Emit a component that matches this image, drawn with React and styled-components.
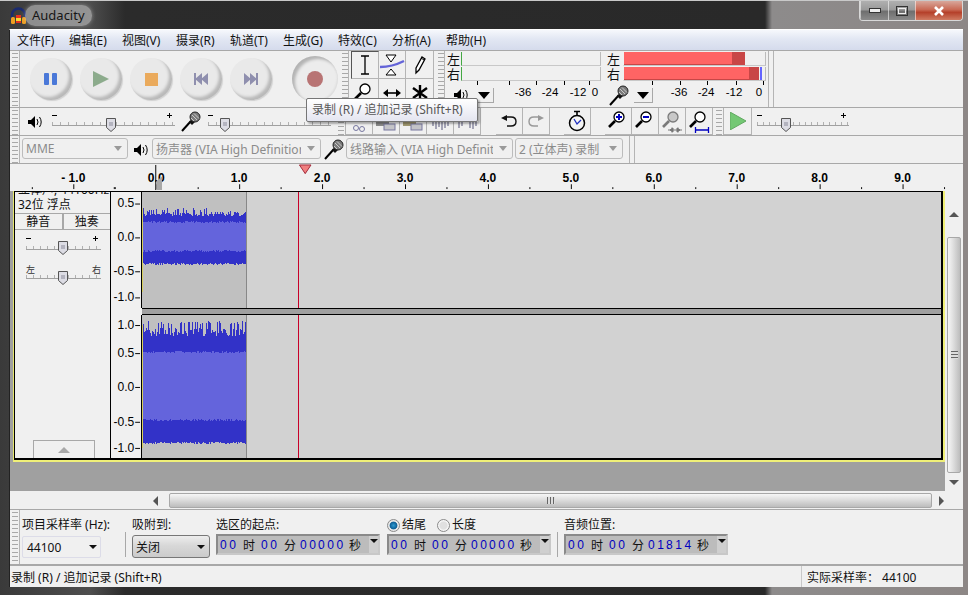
import React from "react";
import styled, { createGlobalStyle } from "styled-components";

const UI_FONT = `"Noto Sans", "Noto Sans CJK SC", sans-serif`;

const GlobalStyle = createGlobalStyle`
  html, body {
    margin: 0;
    padding: 0;
    overflow: hidden;
    background: #1c1c1c;
  }
  body {
    font-family: ${UI_FONT};
    font-size: 12px;
    color: #111;
  }
`;

/* ---------- window chrome ---------- */

const Window = styled.div`
  width: 968px;
  height: 595px;
  overflow: hidden;
  position: relative;
  display: flex;
  flex-direction: column;
  background: linear-gradient(
    90deg,
    #3a3a3a 0,
    #4e4e4e 90px,
    #2b2b2b 125px,
    #292929 765px,
    #8d8b8b 772px,
    #8d8786 968px
  );
`;

const TitleBar = styled.div`
  height: 29px;
  flex: none;
  display: flex;
  align-items: flex-start;
  padding-left: 10px;
  box-sizing: border-box;
  border-top: 1px solid #c9c9c9;
`;

const AppLogo = styled.svg`
  width: 17px;
  height: 18px;
  margin-top: 6px;
`;

const AppName = styled.div`
  margin: 4px 0 0 -2px;
  padding: 0 7px;
  height: 21px;
  line-height: 21px;
  font-size: 13px;
  color: #161616;
  background: rgba(205, 205, 205, 0.55);
  border-radius: 10px;
  box-shadow: 0 0 4px rgba(205, 205, 205, 0.5);
`;

const WinButtons = styled.div`
  margin-left: auto;
  margin-right: 5px;
  display: flex;
  height: 19px;
  border: 1px solid #d8d8d8;
  border-top: none;
  border-radius: 0 0 4px 4px;
  overflow: hidden;
`;

const WinButton = styled.div`
  width: ${(p) => p.$w}px;
  display: flex;
  align-items: center;
  justify-content: center;
  border-left: 1px solid rgba(255, 255, 255, 0.55);
  background: ${(p) =>
    p.$close
      ? "linear-gradient(180deg,#d8a79b 0,#c96a55 45%,#b5402a 60%,#cf7b62 100%)"
      : "linear-gradient(180deg,#b0b0b0 0,#9a9a9a 45%,#6f6f6f 55%,#8a8a8a 100%)"};
`;

const Client = styled.div`
  margin-left: 9px;
  width: 954px;
  height: 558px;
  flex: none;
  padding-left: 1px;
  box-sizing: border-box;
  background: #f0f0f0;
  display: flex;
  flex-direction: column;
  border-top: 1px solid #fff;
  border-left: 1px solid #222;
  padding-left: 0;
`;

const MenuBar = styled.div`
  height: 20px;
  flex: none;
  display: flex;
  padding-left: 7px;
  align-items: center;
  background: linear-gradient(180deg, #f6f8fc 0, #e2e7f3 45%, #d5dbec 100%);
`;

const MenuItem = styled.div`
  width: ${(p) => p.$w}px;
  flex: none;
  font-size: 12px;
  white-space: nowrap;
`;

/* ---------- toolbars ---------- */

const ToolRow = styled.div`
  height: ${(p) => p.$h}px;
  flex: none;
  display: flex;
  border-top: 1px solid #a8a8a8;
  box-sizing: border-box;
`;

const Grip = styled.div`
  width: ${(p) => p.$w || 10}px;
  flex: none;
  margin-left: ${(p) => p.$ml || 0}px;
  box-sizing: border-box;
  border-right: 1px solid #b4b4b4;
  background: repeating-linear-gradient(
    180deg,
    #f0f0f0 0,
    #f0f0f0 2px,
    #a8a8a8 2px,
    #a8a8a8 3px,
    #f0f0f0 3px,
    #f0f0f0 4px
  );
  background-size: 6px 100%;
  background-repeat: no-repeat;
  background-position: 2px 0;
`;

const Transport = styled.div`
  width: 320px;
  flex: none;
  display: flex;
  align-items: center;
  padding-left: 6px;
  box-sizing: border-box;
`;

const TransportSlot = styled.div`
  width: 50px;
  flex: none;
  display: flex;
  justify-content: center;
`;

const RoundButton = styled.div`
  width: 42px;
  height: 42px;
  border-radius: 50%;
  display: flex;
  align-items: center;
  justify-content: center;
  background: #e9e9e9;
  box-shadow: inset -3px -3px 3px #b9b9b9, 1px 1px 1px #d0d0d0;
`;

const RecordButton = styled(RoundButton)`
  width: 46px;
  height: 46px;
  margin-left: 16px;
  background: #ececec;
  box-shadow: inset 3px 3px 3px #b4b4b4, inset -1px -1px 2px #dcdcdc;
`;

const ToolGrid = styled.div`
  width: 83px;
  margin-left: 2px;
  flex: none;
  display: grid;
  grid-template-columns: repeat(3, 1fr);
  grid-template-rows: 28px 28px;
`;

const ToolCell = styled.div`
  display: flex;
  align-items: center;
  justify-content: center;
  border-right: 1px solid #b4b4b4;
  border-bottom: 1px solid #b4b4b4;
  box-sizing: border-box;
  ${(p) => p.$down && "border-left: 1px solid #555; border-top: 1px solid #555;"}
`;

const Meter = styled.div`
  width: ${(p) => p.$w}px;
  flex: none;
  margin-left: ${(p) => p.$ml || 0}px;
  display: flex;
  flex-direction: column;
`;

const MeterLine = styled.div`
  height: 15px;
  flex: none;
  display: flex;
  align-items: center;
`;

const MeterTag = styled.div`
  width: ${(p) => p.$w}px;
  flex: none;
  text-align: center;
  font-size: 13px;
  line-height: 14px;
`;

const MeterBar = styled.div`
  flex: 1;
  height: 14px;
  display: flex;
  box-sizing: border-box;
  border-right: 1px solid #bbb;
  border-bottom: 1px solid #c8c8c8;
  border-left: 1px solid ${(p) => (p.$idle ? "#44a844" : "transparent")};
`;

const MeterRms = styled.div`
  width: ${(p) => p.$w}px;
  background: #ff6464;
  box-shadow: inset 0 -1px 0 #c84646;
`;

const MeterPeak = styled.div`
  width: ${(p) => p.$w}px;
  background: #c84646;
`;

const MeterHold = styled.div`
  width: 2px;
  margin-left: ${(p) => p.$ml}px;
  background: #6464ff;
`;

const MeterFoot = styled.div`
  flex: 1;
  display: flex;
  position: relative;
`;

const FootIcon = styled.div`
  width: ${(p) => p.$w}px;
  flex: none;
  display: flex;
  align-items: center;
  justify-content: center;
  padding-top: 2px;
`;

const FootCaret = styled.div`
  width: 18px;
  height: 14px;
  margin-top: 7px;
  flex: none;
  display: flex;
  align-items: center;
  justify-content: center;
  border-right: 1px solid #a8a8a8;
  border-bottom: 1px solid #a8a8a8;
  &::before {
    content: "";
    border: 6px solid transparent;
    border-top: 7px solid #000;
    border-bottom: none;
  }
`;

const DoubleRule = styled.div`
  width: 4px;
  margin-left: ${(p) => p.$ml}px;
  flex: none;
  border-left: 1px solid #b4b4b4;
  border-right: 1px solid #b4b4b4;
`;

const IconCell = styled.div`
  width: ${(p) => p.$w || 27}px;
  flex: none;
  margin-left: ${(p) => p.$ml || 0}px;
  display: flex;
  align-items: center;
  justify-content: center;
  box-sizing: border-box;
  ${(p) =>
    p.$btn &&
    "border-right: 1px solid #b4b4b4; border-bottom: 1px solid #b4b4b4;"}
`;

const DeviceSelect = styled.div`
  width: ${(p) => p.$w}px;
  flex: none;
  height: 21px;
  margin-top: 2px;
  margin-left: ${(p) => p.$ml || 0}px;
  box-sizing: border-box;
  border: 1px solid #bcbcbc;
  border-radius: 3px;
  display: flex;
  align-items: center;
  padding: 0 5px 0 3px;
  color: #8b8b8b;
  font-size: 12px;
  white-space: nowrap;
  overflow: hidden;
  & > span {
    flex: 1;
    overflow: hidden;
  }
  &::after {
    content: "";
    flex: none;
    margin-left: 6px;
    border: 4px solid transparent;
    border-top: 5px solid #9a9a9a;
    border-bottom: none;
  }
`;

const Tooltip = styled.div`
  position: absolute;
  left: 306px;
  top: 98px;
  width: 172px;
  height: 24px;
  box-sizing: border-box;
  padding-left: 5px;
  line-height: 22px;
  font-size: 12px;
  color: #575757;
  white-space: nowrap;
  border: 1px solid #767676;
  border-radius: 2px;
  background: linear-gradient(180deg, #fff 0, #e4e5f0 100%);
  box-shadow: 2px 2px 2px rgba(0, 0, 0, 0.3);
`;

const RulerStrip = styled.svg`
  display: block;
  flex: none;
  width: 953px;
  height: 28px;
  border-top: 1px solid #a8a8a8;
  box-sizing: border-box;
  background: #f0f0f0;
`;

/* ---------- tracks ---------- */

const Body = styled.div`
  height: 300px;
  flex: none;
  display: flex;
`;

const TrackArea = styled.div`
  width: 935px;
  flex: none;
  background: #a0a0a0;
  padding-left: 3px;
  box-sizing: border-box;
`;

const YellowFrame = styled.div`
  height: 271px;
  box-sizing: border-box;
  border-left: 1px solid #e8e870;
  border-right: 2px solid #f0f078;
  border-bottom: 2px solid #f0f078;
`;

const BlackFrame = styled.div`
  height: 100%;
  box-sizing: border-box;
  display: flex;
  border-left: 1px solid #000;
  border-top: 1px solid #000;
  border-right: 2px solid #000;
  border-bottom: 2px solid #000;
`;

const TrackPanel = styled.div`
  width: 95px;
  flex: none;
  overflow: hidden;
  display: flex;
  flex-direction: column;
  border-right: 1px solid #000;
  background: #f0f0f0;
`;

const PanelLine = styled.div`
  height: 13px;
  line-height: 13px;
  margin-top: ${(p) => p.$mt || 0}px;
  padding-left: 3px;
  font-size: 12px;
  white-space: nowrap;
`;

const MuteRow = styled.div`
  display: flex;
  height: 17px;
  margin-top: 2px;
  box-sizing: border-box;
  border-top: 1px solid #a8a8a8;
  border-bottom: 1px solid #a8a8a8;
`;

const MuteButton = styled.div`
  flex: 1;
  text-align: center;
  line-height: 15px;
  font-size: 12px;
  & + & {
    border-left: 2px solid #a8a8a8;
  }
`;

const PanelSlider = styled.svg`
  display: block;
  width: 95px;
  height: ${(p) => p.$h}px;
  flex: none;
  margin-top: ${(p) => p.$mt || 0}px;
`;

const CollapseButton = styled.div`
  width: 62px;
  height: 18px;
  margin: auto 0 0 18px;
  box-sizing: border-box;
  border: 1px solid #a8a8a8;
  border-bottom: none;
  display: flex;
  align-items: center;
  justify-content: center;
  &::before {
    content: "";
    border: 6px solid transparent;
    border-bottom: 6px solid #a8a8a8;
    border-top: none;
  }
`;

const TrackStack = styled.div`
  flex: 1;
  display: flex;
  flex-direction: column;
  background: #f0f0f0;
`;

const TrackRow = styled.div`
  height: ${(p) => p.$h}px;
  flex: none;
  display: flex;
`;

const ScaleSvg = styled.svg`
  display: block;
  width: 31px;
  flex: none;
  height: 100%;
  box-sizing: border-box;
  border-right: 1px solid #000;
`;

const Lane = styled.div`
  flex: 1;
  display: flex;
  background: #d2d2d2;
  position: relative;
`;

const ClipWave = styled.svg`
  display: block;
  width: 104px;
  height: 100%;
  flex: none;
  background: #c0c0c0;
  border-right: 1px solid #888;
  box-sizing: content-box;
`;

const PlayLine = styled.div`
  width: 1px;
  margin-left: 51px;
  background: #c80028;
`;

const TrackGap = styled.div`
  height: 7px;
  flex: none;
  box-sizing: border-box;
  margin-left: 31px;
  background: #a0a0a0;
  border-top: 1px solid #000;
  border-bottom: 1px solid #000;
`;

/* ---------- scrollbars ---------- */

const VScroll = styled.div`
  width: 18px;
  flex: none;
  display: grid;
  grid-template-rows: 46px 236px 18px;
  justify-items: center;
  align-items: center;
`;

const Arrow = styled.div`
  width: 0;
  height: 0;
  border: ${(p) => p.$s || 5}px solid transparent;
  ${(p) => `border-${p.$side}: none;`}
  ${(p) =>
    `border-${{ top: "bottom", bottom: "top", left: "right", right: "left" }[p.$side]}: ${
      p.$s || 5
    }px solid #555;`}
`;

const VThumb = styled.div`
  width: 14px;
  height: 100%;
  box-sizing: border-box;
  border: 1px solid #a8a8a8;
  border-radius: 2px;
  background: linear-gradient(90deg, #f6f6f6 0, #e0e0e0 40%, #bcbcbc 100%);
  display: flex;
  align-items: center;
  justify-content: center;
  &::before {
    content: "";
    width: 7px;
    height: 8px;
    background: repeating-linear-gradient(180deg, #666 0, #666 1px, #ddd 1px, #ddd 3px);
  }
`;

const HScroll = styled.div`
  height: 17px;
  flex: none;
  display: flex;
  align-items: center;
  margin-top: 1px;
`;

const HThumb = styled.div`
  width: 763px;
  height: 15px;
  box-sizing: border-box;
  flex: none;
  margin-left: 6px;
  border: 1px solid #a8a8a8;
  border-radius: 2px;
  background: linear-gradient(180deg, #f6f6f6 0, #e0e0e0 40%, #bcbcbc 100%);
  display: flex;
  align-items: center;
  justify-content: center;
  &::before {
    content: "";
    width: 8px;
    height: 7px;
    background: repeating-linear-gradient(90deg, #666 0, #666 1px, #ddd 1px, #ddd 3px);
  }
`;

const ArrowSlot = styled.div`
  width: ${(p) => p.$w}px;
  margin-left: ${(p) => p.$ml || 0}px;
  flex: none;
  display: flex;
  justify-content: center;
`;

/* ---------- selection bar ---------- */

const SelectionBar = styled.div`
  height: 57px;
  flex: none;
  display: flex;
  box-sizing: border-box;
  border-top: 1px solid #a8a8a8;
  border-bottom: 2px solid #a8a8a8;
`;

const Field = styled.div`
  width: ${(p) => p.$w}px;
  margin-left: ${(p) => p.$ml || 0}px;
  flex: none;
  display: flex;
  flex-direction: column;
`;

const FieldLabel = styled.div`
  height: 24px;
  padding-top: 6px;
  box-sizing: border-box;
  line-height: 16px;
  font-size: 12px;
  white-space: nowrap;
  display: flex;
  align-items: center;
`;

const SelDivider = styled.div`
  width: 1px;
  height: 25px;
  margin: 22px 0 0 ${(p) => p.$ml}px;
  background: #a8a8a8;
  flex: none;
`;

const RateBox = styled.div`
  width: 79px;
  height: 22px;
  margin-top: 2px;
  box-sizing: border-box;
  border: 1px solid #dcdce8;
  border-radius: 2px;
  display: flex;
  align-items: center;
  padding: 0 3px 0 4px;
  justify-content: space-between;
  &::after {
    content: "";
    border: 4px solid transparent;
    border-top: 4px solid #111;
    border-bottom: none;
  }
`;

const SnapBox = styled.div`
  width: 78px;
  height: 23px;
  box-sizing: border-box;
  border: 1px solid #777;
  border-radius: 3px;
  background: linear-gradient(180deg, #ededed 0, #d8d8d8 45%, #cbcbcb 100%);
  display: flex;
  align-items: center;
  padding: 0 4px 0 3px;
  justify-content: space-between;
  margin-top: 1px;
  &::after {
    content: "";
    border: 4px solid transparent;
    border-top: 4px solid #111;
    border-bottom: none;
  }
`;

const TimeBox = styled.div`
  width: 164px;
  height: 21px;
  flex: none;
  box-sizing: border-box;
  border: 2px solid #8a8a8a;
  border-right-color: #c8c8c8;
  border-bottom-color: #c8c8c8;
  background: #bcbcbc;
  display: flex;
  align-items: center;
  padding-left: 2px;
  font-size: 12px;
`;

const Digits = styled.span`
  color: #0000c0;
  letter-spacing: 2.6px;
  font-family: "Liberation Sans", sans-serif;
  width: ${(p) => p.$w}px;
  flex: none;
`;

const Unit = styled.span`
  width: ${(p) => p.$w || 24}px;
  flex: none;
  color: #111;
`;

const TimeCaret = styled.div`
  width: 9px;
  height: 100%;
  margin-left: auto;
  background: #cfcfcf;
  display: flex;
  justify-content: center;
  padding-top: 3px;
  box-sizing: border-box;
  &::before {
    content: "";
    border: 4px solid transparent;
    border-top: 4px solid #111;
    border-bottom: none;
  }
`;

const Radio = styled.span`
  width: 13px;
  height: 13px;
  box-sizing: border-box;
  flex: none;
  border-radius: 50%;
  border: 1px solid #8a8a8a;
  margin-right: 2px;
  background: ${(p) =>
    p.$on
      ? "radial-gradient(circle, #2f9ad0 0, #0d5f96 45%, #e8e8e8 55%)"
      : "radial-gradient(circle, #e0e0e0 0, #e0e0e0 45%, #f6f6f6 60%)"};
`;

const RadioText = styled.span`
  margin-right: 11px;
`;

const StatusBar = styled.div`
  flex: 1;
  display: flex;
  align-items: center;
  font-size: 12px;
  padding-left: 1px;
  position: relative;
`;

const StatusRight = styled.div`
  margin-left: auto;
  width: 162px;
  height: 100%;
  box-sizing: border-box;
  border-left: 1px solid #c8c8c8;
  padding-left: 5px;
  display: flex;
  align-items: center;
`;

/* ---------- drawings ---------- */

const Speaker = ({ color = "#000" }) => (
  <svg width="16" height="14" viewBox="0 0 16 14">
    <path d="M1 5h3l4-4v12L4 9H1z" fill={color} />
    <path d="M10 4q2 3 0 6M12.5 2q3.4 5 0 10" fill="none" stroke={color} strokeWidth="1" />
  </svg>
);

const Mic = () => (
  <svg width="20" height="21" viewBox="0 0 20 21">
    <path d="M1 20l9-10" stroke="#000" strokeWidth="2" />
    <path d="M8 11l3 3 3-3-3-3z" fill="#111" />
    <circle cx="14" cy="6" r="5" fill="#7a7a7a" stroke="#222" />
    <path d="M11 4l5 5M13 2.500l5 5M10 7l3 3" stroke="#ddd" strokeWidth="0.8" />
  </svg>
);

const Glass = ({ mark, faded, tail }) => {
  const c = faded ? "#7a7a7a" : "#000";
  return (
    <svg width="24" height="24" viewBox="0 0 24 24">
      <path d="M3 18l6-6" stroke={c} strokeWidth="2.600" />
      <circle cx="13" cy="8" r="5" fill={faded ? "#c8c8c8" : "#fff"} stroke={c} strokeWidth="1.300" />
      {mark === "in" && <path d="M13 5v6M10 8h6" stroke="#0000c0" strokeWidth="2" />}
      {mark === "out" && <path d="M10 8h6" stroke="#0000c0" strokeWidth="2" />}
      {tail === "grey" && (
        <path d="M8 21h14M12 18.500v5M18 18.500v5M10 21l3-2v4zM20 21l-3-2v4z" stroke="#777" fill="#777" />
      )}
      {tail === "blue" && <path d="M8 21h14M8.500 18v6M21.500 18v6" stroke="#0000c0" strokeWidth="1.300" />}
    </svg>
  );
};

const Triangle = ({ color }) => (
  <svg width="16" height="16" viewBox="0 0 16 16">
    <path d="M0 0L16 8 0 16z" fill={color} />
  </svg>
);

const SkipIcon = ({ flip }) => (
  <svg width="16" height="14" viewBox="0 0 16 14" style={flip ? { transform: "scaleX(-1)" } : undefined}>
    <path d="M1 1l7 6-7 6zM7 1l7 6-7 6z" fill="#8f8fae" />
    <rect x="13" y="1" width="2" height="12" fill="#8f8fae" />
  </svg>
);

const sliderTicks = (x0, x1, y, step) => {
  let d = "";
  for (let x = x0; x <= x1; x += step) d += `M${x + 0.5} ${y - 3}V${y}`;
  return d;
};

const Thumb = ({ x, y }) => (
  <g transform={`translate(${x - 5} ${y})`}>
    <path d="M.5.5h9v9L5 13.500.5 9.500z" fill="#dcdce4" stroke="#555" />
    <path d="M3 5h4M3 7h4" stroke="#8a8a9a" />
  </g>
);

// a gain style slider: minus and plus marks, scale and thumb
const Slider = ({ w, thumb, ml = 0, plus = true }) => (
  <svg width={w} height="27" viewBox={`0 0 ${w} 27`} style={{ marginLeft: ml, flex: "none", display: "block" }}>
    <path d="M0 7.500h5" stroke="#000" />
    {plus && <path d={`M${w - 8} 7.500h5M${w - 5.500} 5v5`} stroke="#000" />}
    <path d={`M0 17.500H${w}`} stroke="#a0a0a0" />
    <path d={sliderTicks(0, w - 1, 17, Math.round(w / 16))} stroke="#b0b0b0" />
    <Thumb x={thumb} y={10} />
  </svg>
);

/* waveform columns, noise is fixed by a small seeded generator */
const makeRand = (seed) => {
  let s = seed;
  return () => {
    s = (s * 16807) % 2147483647;
    return s / 2147483647;
  };
};

const buildWave = (seed, { top, topJit, rmsTop, rmsBot, bot, botJit, spike }) => {
  const r = makeRand(seed);
  let peak = "";
  let rms = "";
  for (let x = 1; x < 104; x++) {
    const t = r() < spike ? top + r() * 3 : top + topJit * (0.45 + r() * 0.55);
    const b = bot + r() * botJit;
    peak += `M${x + 0.5} ${Math.round(t)}V${Math.round(b)}`;
    const a = rmsTop + Math.round(r() * 2);
    const c = rmsBot - Math.round(r() * 2);
    rms += `M${x + 0.5} ${a}V${c}`;
  }
  return { peak, rms };
};

const waveA = buildWave(77, { top: 16, topJit: 8, rmsTop: 29, rmsBot: 60, bot: 71, botJit: 2, spike: 0.18 });
const waveB = buildWave(4242, { top: 6, topJit: 15, rmsTop: 36, rmsBot: 106, bot: 127, botJit: 2, spike: 0.32 });

const Wave = ({ data, from, to }) => (
  <ClipWave viewBox={`0 0 104 ${to}`}>
    <path d={data.peak} stroke="#3232c8" shapeRendering="crispEdges" />
    <path d={data.rms} stroke="#6464dc" shapeRendering="crispEdges" />
    <path d={`M.5 ${from}V${to - from}`} stroke="#d8d060" shapeRendering="crispEdges" />
  </ClipWave>
);

const Scale = ({ h, marks }) => (
  <ScaleSvg viewBox={`0 0 31 ${h}`}>
    {marks.map(([label, y]) => (
      <g key={label}>
        <text x="24" y={y + 4} textAnchor="end" fontFamily="Liberation Sans" fontWeight="400" fontSize="12.500" fill="#000">
          {label}
        </text>
        <path d={`M25 ${y + 0.5}h5`} stroke="#000" />
      </g>
    ))}
  </ScaleSvg>
);

const RULER_ZERO = 134;
const RULER_STEP = 86;

const Ruler = () => {
  const marks = [];
  for (let n = -1; n <= 9; n++) {
    const x = RULER_ZERO + n * RULER_STEP;
    marks.push(
      <g key={n}>
        <text x={x} y="19" textAnchor="middle" fontFamily="Liberation Sans" fontWeight="700" fontSize="12.500" fill="#000">
          {n < 0 ? "- 1.0" : `${n}.0`}
        </text>
        <path d={`M${x + 0.5} 21v5`} stroke="#000" />
        <path d={`M${x + 43.5} 24v2`} stroke="#000" />
      </g>
    );
  }
  return (
    <RulerStrip viewBox="0 0 953 28">
      {marks}
      <path d={`M${RULER_ZERO - 43.5} 24v2M5.500 24v2`} stroke="#000" />
      <path d="M133.500 1v26" stroke="#000" />
      <path d="M134 27v-9l6-5v14z" fill="#a8a8a8" />
      <path d="M282.500 1h12L288.500 10z" fill="#f08080" stroke="#a02838" />
    </RulerStrip>
  );
};

const MeterScale = ({ marks, ticks, w }) => (
  <svg width={w} height="26" viewBox={`0 0 ${w} 26`} style={{ position: "absolute", right: 0, top: 0 }}>
    {ticks.map((x) => (
      <path key={x} d={`M${x + 0.5} 0v4`} stroke="#000" />
    ))}
    {marks.map(([label, x]) => (
      <text key={label} x={x} y="15" textAnchor="middle" fontFamily="Liberation Sans" fontSize="11.500" fill="#000">
        {label}
      </text>
    ))}
  </svg>
);

const TimeField = ({ a, b, c, d }) => (
  <TimeBox>
    <Digits $w={23}>{a}</Digits>
    <Unit $w={18}>时</Unit>
    <Digits $w={23}>{b}</Digits>
    <Unit $w={16}>分</Unit>
    <Digits $w={18}>{c}.</Digits>
    <Digits $w={31}>{d}</Digits>
    <Unit $w={12}>秒</Unit>
    <TimeCaret />
  </TimeBox>
);

const menus = [
  ["文件(F)", 52],
  ["编辑(E)", 53],
  ["视图(V)", 54],
  ["摄录(R)", 54],
  ["轨道(T)", 53],
  ["生成(G)", 55],
  ["特效(C)", 54],
  ["分析(A)", 54],
  ["帮助(H)", 60],
];

export default function App() {
  return (
    <Window>
      <GlobalStyle />
      <TitleBar>
        <AppLogo viewBox="0 0 17 18">
          <path d="M2 14V8a6.500 6.500 0 0 1 13 0v6" fill="none" stroke="#1a2a70" strokeWidth="2.500" />
          <rect x="1" y="10" width="4" height="7" rx="1.500" fill="#f0a020" />
          <rect x="12" y="10" width="4" height="7" rx="1.500" fill="#f0a020" />
          <rect x="6" y="8" width="5" height="8" fill="#e83020" />
          <rect x="6" y="11" width="5" height="3" fill="#f8d830" />
        </AppLogo>
        <AppName>Audacity</AppName>
        <WinButtons>
          <WinButton $w={27}>
            <svg width="12" height="6" viewBox="0 0 12 6">
              <rect x=".5" y=".5" width="11" height="4" fill="#eee" stroke="#333" />
            </svg>
          </WinButton>
          <WinButton $w={26}>
            <svg width="12" height="10" viewBox="0 0 12 10">
              <rect x=".5" y=".5" width="11" height="9" fill="none" stroke="#333" />
              <rect x="2.500" y="2.500" width="7" height="5" fill="none" stroke="#eee" />
            </svg>
          </WinButton>
          <WinButton $w={46} $close>
            <svg width="12" height="10" viewBox="0 0 12 10">
              <path d="M2 1l8 8M10 1l-8 8" stroke="#fff" strokeWidth="2.600" />
            </svg>
          </WinButton>
        </WinButtons>
      </TitleBar>

      <Client>
        <MenuBar>
          {menus.map(([t, w]) => (
            <MenuItem key={t} $w={w}>
              {t}
            </MenuItem>
          ))}
        </MenuBar>

        <ToolRow $h={57}>
          <Grip />
          <Transport>
            <TransportSlot>
              <RoundButton>
                <svg width="14" height="12" viewBox="0 0 14 12">
                  <rect width="5" height="12" rx="1" fill="#4a78d8" />
                  <rect x="8" width="5" height="12" rx="1" fill="#4a78d8" />
                </svg>
              </RoundButton>
            </TransportSlot>
            <TransportSlot>
              <RoundButton>
                <Triangle color="#8cab8c" />
              </RoundButton>
            </TransportSlot>
            <TransportSlot>
              <RoundButton>
                <svg width="13" height="13" viewBox="0 0 13 13">
                  <rect width="13" height="13" fill="#eaaa5c" />
                </svg>
              </RoundButton>
            </TransportSlot>
            <TransportSlot>
              <RoundButton>
                <SkipIcon flip />
              </RoundButton>
            </TransportSlot>
            <TransportSlot>
              <RoundButton>
                <SkipIcon />
              </RoundButton>
            </TransportSlot>
            <RecordButton>
              <svg width="16" height="16" viewBox="0 0 16 16">
                <circle cx="8" cy="8" r="8" fill="#b87474" />
              </svg>
            </RecordButton>
          </Transport>
          <Grip $w={9} />
          <ToolGrid>
            <ToolCell $down>
              <svg width="12" height="20" viewBox="0 0 12 20">
                <path d="M2 1h8M2 19h8M6 1v18" stroke="#000" strokeWidth="1.300" />
              </svg>
            </ToolCell>
            <ToolCell>
              <svg width="26" height="22" viewBox="0 0 26 22">
                <path d="M7 1h10l-5 7zM7 21h10l-5-6z" fill="#fff" stroke="#000" />
                <path d="M1 13q12 0 24-6" fill="none" stroke="#6464d8" strokeWidth="2.500" />
              </svg>
            </ToolCell>
            <ToolCell>
              <svg width="14" height="20" viewBox="0 0 14 20">
                <path d="M3 13L9 2l3 2-6 11-3 3z" fill="#fff" stroke="#000" strokeWidth="1.300" />
                <path d="M8 3l3 2" stroke="#000" />
              </svg>
            </ToolCell>
            <ToolCell>
              <Glass />
            </ToolCell>
            <ToolCell>
              <svg width="18" height="10" viewBox="0 0 18 10">
                <path d="M3 5h12" stroke="#000" strokeWidth="1.600" />
                <path d="M0 5l5-4v8zM18 5l-5-4v8z" fill="#000" />
              </svg>
            </ToolCell>
            <ToolCell>
              <svg width="16" height="16" viewBox="0 0 16 16">
                <path d="M8 0v16M1 3l14 10M15 3L1 13" stroke="#000" strokeWidth="2.400" />
              </svg>
            </ToolCell>
          </ToolGrid>
          <Grip $w={9} $ml={2} />
          <Meter $w={155} $ml={1}>
            <MeterLine>
              <MeterTag $w={15}>左</MeterTag>
              <MeterBar $idle />
            </MeterLine>
            <MeterLine>
              <MeterTag $w={15}>右</MeterTag>
              <MeterBar $idle />
            </MeterLine>
            <MeterFoot>
              <FootIcon $w={29}>
                <Speaker />
              </FootIcon>
              <FootCaret />
              <MeterScale
                w={125}
                ticks={[1, 33, 60, 88, 113]}
                marks={[
                  ["-36", 47],
                  ["-24", 74],
                  ["-12", 102],
                  ["0", 119],
                ]}
              />
            </MeterFoot>
          </Meter>
          <Meter $w={162} $ml={3}>
            <MeterLine>
              <MeterTag $w={19}>左</MeterTag>
              <MeterBar>
                <MeterRms $w={108} />
                <MeterPeak $w={13} />
              </MeterBar>
            </MeterLine>
            <MeterLine>
              <MeterTag $w={19}>右</MeterTag>
              <MeterBar>
                <MeterRms $w={125} />
                <MeterPeak $w={10} />
                <MeterHold $ml={1} />
              </MeterBar>
            </MeterLine>
            <MeterFoot>
              <FootIcon $w={30}>
                <Mic />
              </FootIcon>
              <FootCaret />
              <MeterScale
                w={115}
                ticks={[1, 29, 56, 85, 112]}
                marks={[
                  ["-36", 28],
                  ["-24", 55],
                  ["-12", 83],
                  ["0", 108],
                ]}
              />
            </MeterFoot>
          </Meter>
          <DoubleRule $ml={2} />
        </ToolRow>

        <ToolRow $h={28}>
          <Grip />
          <IconCell $w={16} $ml={7}>
            <Speaker />
          </IconCell>
          <Slider w={123} thumb={59} ml={9} />
          <IconCell $w={20} $ml={6}>
            <Mic />
          </IconCell>
          <Slider w={123} thumb={17} ml={7} />
          <Grip $ml={5} />
          <IconCell $btn>
            <svg width="14" height="26" viewBox="0 0 14 26">
              <circle cx="4" cy="20" r="2.500" fill="none" stroke="#7878a0" />
              <circle cx="10" cy="21" r="2.500" fill="none" stroke="#7878a0" />
            </svg>
          </IconCell>
          <IconCell $btn>
            <svg width="22" height="26" viewBox="0 0 22 26">
              <rect x="1" y="13" width="13" height="5" fill="#8a8a8a" />
              <rect x="9" y="16" width="11" height="6" fill="#c4c4c8" stroke="#7878a0" />
            </svg>
          </IconCell>
          <IconCell $btn>
            <svg width="22" height="26" viewBox="0 0 22 26">
              <rect x="1" y="13" width="13" height="5" fill="#a09870" />
              <rect x="9" y="16" width="11" height="6" fill="#c4c4c8" stroke="#7878a0" />
            </svg>
          </IconCell>
          <IconCell $btn>
            <svg width="22" height="26" viewBox="0 0 22 26">
              <path d="M2 12h18M4 13v5M7 13v8M10 13v6M13 13v9M16 13v7M19 13v5" stroke="#56567a" />
            </svg>
          </IconCell>
          <IconCell $btn>
            <svg width="22" height="26" viewBox="0 0 22 26">
              <path d="M3 12v8M6 12v6M14 12v8M17 12v9M20 12v6" stroke="#56567a" />
            </svg>
          </IconCell>
          <IconCell $btn $ml={15}>
            <svg width="18" height="14" viewBox="0 0 18 14">
              <path d="M5 3h6q5 0 5 4.500T11 12H7" fill="none" stroke="#111" strokeWidth="1.400" />
              <path d="M1 4l6-3v6z" fill="#111" />
            </svg>
          </IconCell>
          <IconCell $btn>
            <svg width="18" height="14" viewBox="0 0 18 14">
              <path d="M13 3H7Q2 3 2 7.500T7 12h4" fill="none" stroke="#999" strokeWidth="1.400" />
              <path d="M17 4l-6-3v6z" fill="#999" />
            </svg>
          </IconCell>
          <IconCell $btn $ml={14}>
            <svg width="18" height="22" viewBox="0 0 18 22">
              <path d="M6 1.500h6M9 2v3" stroke="#000" strokeWidth="1.600" />
              <circle cx="9" cy="13" r="7.500" fill="#f4f4f4" stroke="#000" strokeWidth="1.500" />
              <path d="M6 9l3 5 4-4" fill="none" stroke="#2030c0" strokeWidth="1.300" />
            </svg>
          </IconCell>
          <IconCell $btn $ml={14}>
            <Glass mark="in" />
          </IconCell>
          <IconCell $btn>
            <Glass mark="out" />
          </IconCell>
          <IconCell $btn>
            <Glass faded tail="grey" />
          </IconCell>
          <IconCell $btn>
            <Glass tail="blue" />
          </IconCell>
          <Grip $ml={1} />
          <IconCell $btn $w={28}>
            <svg width="16" height="18" viewBox="0 0 16 18">
              <path d="M0 0L16 9 0 18z" fill="#74c874" stroke="#60a860" />
            </svg>
          </IconCell>
          <Slider w={92} thumb={29} ml={5} />
        </ToolRow>

        <ToolRow $h={28}>
          <Grip />
          <DeviceSelect $w={106} $ml={2}>
            <span>MME</span>
          </DeviceSelect>
          <IconCell $w={16} $ml={5}>
            <Speaker />
          </IconCell>
          <DeviceSelect $w={169} $ml={3}>
            <span>扬声器 (VIA High Definition</span>
          </DeviceSelect>
          <IconCell $w={20} $ml={3}>
            <Mic />
          </IconCell>
          <DeviceSelect $w={167} $ml={2}>
            <span>线路输入 (VIA High Definition</span>
          </DeviceSelect>
          <DeviceSelect $w={108} $ml={2}>
            <span>2 (立体声) 录制</span>
          </DeviceSelect>
          <DoubleRule $ml={6} />
        </ToolRow>

        <Ruler />

        <Body>
          <TrackArea>
            <YellowFrame>
              <BlackFrame>
                <TrackPanel>
                  <PanelLine $mt={-9}>立体声, 44100Hz</PanelLine>
                  <PanelLine $mt={2}>32位 浮点</PanelLine>
                  <MuteRow>
                    <MuteButton>静音</MuteButton>
                    <MuteButton>独奏</MuteButton>
                  </MuteRow>
                  <PanelSlider $h={30} $mt={4} viewBox="0 0 95 30">
                    <path d="M11 4.500h5M78 4.500h5M80.500 2v5" stroke="#000" />
                    <path d="M11 15.500h75" stroke="#a0a0a0" />
                    <path d={sliderTicks(11, 86, 15, 7)} stroke="#b0b0b0" />
                    <Thumb x={48} y={7} />
                  </PanelSlider>
                  <PanelSlider $h={26} viewBox="0 0 95 26">
                    <text x="11" y="9" fontSize="9" fontFamily="Noto Sans CJK SC" fill="#333">
                      左
                    </text>
                    <text x="77" y="9" fontSize="9" fontFamily="Noto Sans CJK SC" fill="#333">
                      右
                    </text>
                    <path d="M11 14.500h75" stroke="#a0a0a0" />
                    <path d={sliderTicks(11, 86, 14, 7)} stroke="#b0b0b0" />
                    <Thumb x={48} y={7} />
                  </PanelSlider>
                  <CollapseButton />
                </TrackPanel>
                <TrackStack>
                  <TrackRow $h={116}>
                    <Scale
                      h={116}
                      marks={[
                        ["0.5", 10],
                        ["0.0", 45],
                        ["-0.5", 80],
                        ["-1.0", 107],
                      ]}
                    />
                    <Lane>
                      <Wave data={waveA} from={16} to={116} />
                      <PlayLine />
                    </Lane>
                  </TrackRow>
                  <TrackGap />
                  <TrackRow $h={143}>
                    <Scale
                      h={143}
                      marks={[
                        ["1.0", 8],
                        ["0.5", 37],
                        ["0.0", 72],
                        ["-0.5", 108],
                        ["-1.0", 135],
                      ]}
                    />
                    <Lane>
                      <Wave data={waveB} from={10} to={143} />
                      <PlayLine />
                    </Lane>
                  </TrackRow>
                </TrackStack>
              </BlackFrame>
            </YellowFrame>
          </TrackArea>
          <VScroll>
            <Arrow $side="top" />
            <VThumb />
            <Arrow $side="bottom" />
          </VScroll>
        </Body>

        <HScroll>
          <ArrowSlot $w={16} $ml={137}>
            <Arrow $side="left" $s={5} />
          </ArrowSlot>
          <HThumb />
          <ArrowSlot $w={18}>
            <Arrow $side="right" $s={5} />
          </ArrowSlot>
        </HScroll>

        <SelectionBar>
          <Grip />
          <Field $w={103} $ml={2}>
            <FieldLabel>项目采样率 (Hz):</FieldLabel>
            <RateBox>44100</RateBox>
          </Field>
          <SelDivider $ml={0} />
          <Field $w={84} $ml={6}>
            <FieldLabel>吸附到:</FieldLabel>
            <SnapBox>关闭</SnapBox>
          </Field>
          <Field $w={171} $ml={0}>
            <FieldLabel>选区的起点:</FieldLabel>
            <TimeField a="00" b="00" c="00" d="000" />
          </Field>
          <Field $w={170}>
            <FieldLabel>
              <Radio $on />
              <RadioText>结尾</RadioText>
              <Radio />
              <span>长度</span>
            </FieldLabel>
            <TimeField a="00" b="00" c="00" d="000" />
          </Field>
          <SelDivider $ml={0} />
          <Field $w={170} $ml={6}>
            <FieldLabel>音频位置:</FieldLabel>
            <TimeField a="00" b="00" c="01" d="814" />
          </Field>
        </SelectionBar>

        <StatusBar>
          录制 (R) / 追加记录 (Shift+R)
          <StatusRight>实际采样率： 44100</StatusRight>
        </StatusBar>
      </Client>

      <Tooltip>录制 (R) / 追加记录 (Shift+R)</Tooltip>
    </Window>
  );
}
